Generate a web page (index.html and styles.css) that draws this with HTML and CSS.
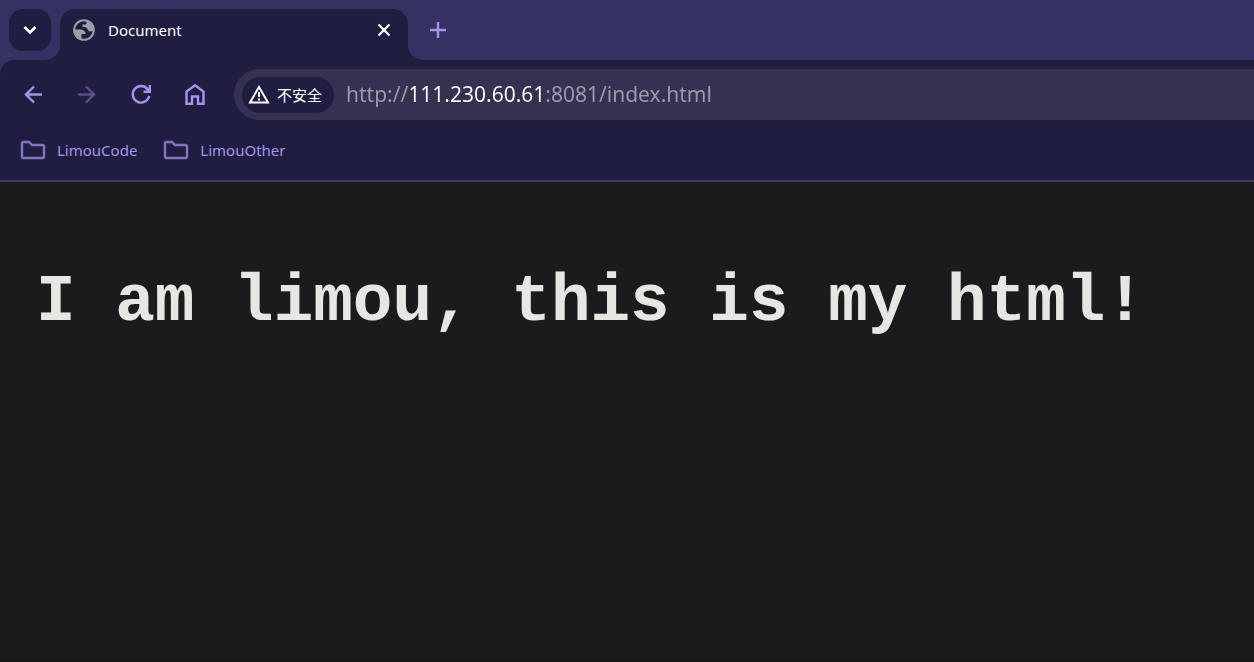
FILE: index.html
```html
<!DOCTYPE html>
<html lang="zh-CN">
<head>
<meta charset="utf-8">
<meta name="viewport" content="width=device-width, initial-scale=1">
<title>Document</title>
<link rel="stylesheet" href="styles.css">
</head>
<body>
<div class="browser">
  <header class="tab-strip">
    <button class="tab-search" type="button" aria-label="Search tabs">
      <svg width="14" height="10" viewBox="0 0 14 10" fill="none" stroke="#fff" stroke-width="2.6"><path d="M1.5 2 7 7.5 12.5 2"/></svg>
    </button>
    <div class="tab">
      <svg class="flare flare-left" width="15" height="15" viewBox="0 0 15 15"><path d="M15 0v15H0A15 15 0 0 0 15 0z"/></svg>
      <svg class="favicon" width="24" height="24" viewBox="0 0 24 24">
        <circle cx="12" cy="12" r="9.800" fill="none" stroke="#9aa0a6" stroke-width="2"/>
        <path fill="#9aa0a6" d="M1.500 11.500H8.500c3 0 4.800 1.500 5.300 4.500H9.500v3.500l-1 2.500C4 20.500 1.500 17 1.500 11.500z"/>
        <path fill="#9aa0a6" d="M14.500 1.800V5c0 1-.8 1.500-1.800 1.500H10.500V9c2.500 0 4 .3 4.800 2 .7 1.600 1.600 2.400 3 2.400 1.600 0 2.700-.6 4-1.400C22.500 7 19 2.800 14.500 1.800z"/>
      </svg>
      <span class="tab-title">Document</span>
      <button class="tab-close" type="button" aria-label="Close tab">
        <svg width="14" height="14" viewBox="0 0 14 14" stroke="#fff" stroke-width="2.2"><path d="m1.500 1.500 11 11m0-11-11 11"/></svg>
      </button>
      <svg class="flare flare-right" width="15" height="15" viewBox="0 0 15 15"><path d="M0 0v15h15A15 15 0 0 1 0 0z"/></svg>
    </div>
    <button class="new-tab" type="button" aria-label="New tab">
      <svg width="16" height="16" viewBox="0 0 16 16" stroke="#a594ec" stroke-width="2.400"><path d="M8 0v16M0 8h16"/></svg>
    </button>
  </header>

  <div class="chrome">
    <nav class="toolbar" aria-label="Navigation">
      <div class="nav-buttons">
        <button type="button" aria-label="Back"><svg width="24" height="24" viewBox="0 0 24 24"><path d="M21 11.500H5M13 3.500l-8 8 8 8"/></svg></button>
        <button type="button" aria-label="Forward" disabled><svg width="24" height="24" viewBox="0 0 24 24"><path d="M3 11.500h16M11 3.500l8 8-8 8"/></svg></button>
        <button type="button" aria-label="Reload"><svg width="24" height="24" viewBox="0 0 24 24"><path d="M18.500 6A8.300 8.300 0 1 0 20.200 13M20.800 2v6.800H14.500M19.500 7.500 16.500 4.500"/></svg></button>
        <button type="button" aria-label="Home"><svg width="24" height="24" viewBox="0 0 24 24"><path d="M3.500 20.800V8.500L12 2.200 20.500 8.500v12.300H15V13.500H9v7.300H3.500z"/></svg></button>
      </div>
      <div class="address-bar">
        <button class="security" type="button">
          <svg width="22" height="20" viewBox="0 0 22 20" fill="none" stroke="#fff"><path stroke-width="2" d="M11 2 20 17.500H2z"/><path stroke-width="2" d="M11 7v5M11 13.500v2"/></svg>
          <span>不安全</span>
        </button>
        <input class="url" type="text" aria-label="Address" value="http://111.230.60.61:8081/index.html" spellcheck="false">
      </div>
    </nav>
    <nav class="bookmarks" aria-label="Bookmarks">
      <a href="#"><svg width="26" height="20" viewBox="0 0 26 20"><path d="M3.500 2h5.500l3 3H22.500q1.500 0 1.500 1.500v10q0 1.500-1.500 1.500H3.500q-1.500 0-1.500-1.500V3.500q0-1.500 1.500-1.500z"/></svg>LimouCode</a>
      <a href="#"><svg width="26" height="20" viewBox="0 0 26 20"><path d="M3.500 2h5.500l3 3H22.500q1.500 0 1.500 1.500v10q0 1.500-1.500 1.500H3.500q-1.500 0-1.500-1.500V3.500q0-1.500 1.500-1.500z"/></svg>LimouOther</a>
    </nav>
  </div>

  <main class="page">
    <h1>I am limou, this is my html!</h1>
  </main>
</div>
</body>
</html>
```
FILE: styles.css
```css
* { box-sizing: border-box; }

body {
  margin: 0;
  background: #353263;
  color: #fff;
  font-family: "Noto Sans", "Noto Sans CJK SC", sans-serif;
}

button {
  display: flex;
  align-items: center;
  justify-content: center;
  padding: 0;
  border: 0;
  background: none;
  color: inherit;
  font: inherit;
}

svg { flex: none; }

.browser {
  display: flex;
  flex-direction: column;
  min-height: 100vh;
}

.tab-strip {
  display: flex;
  gap: 9px;
  height: 60px;
  padding: 9px 9px 0;
}

.tab-search {
  width: 42px;
  height: 42px;
  border-radius: 14px;
  background: #201e40;
}

.tab {
  position: relative;
  display: flex;
  align-items: center;
  flex: 0 1 348px;
  gap: 12px;
  padding: 0 16px 9px 12px;
  border-radius: 15px 15px 0 0;
  background: #201e40;
}

.tab-title {
  flex: 1;
  font-size: 15px;
}

.tab-close {
  width: 16px;
  height: 16px;
}

.flare {
  position: absolute;
  bottom: 0;
  fill: #201e40;
}

.flare-left { right: 100%; }
.flare-right { left: 100%; }

.new-tab {
  width: 42px;
  height: 42px;
}

.chrome {
  border-bottom: 2px solid #3f3969;
  border-radius: 14px 0 0 0;
  background: #201e40;
}

.toolbar {
  display: flex;
  align-items: center;
  gap: 27px;
  padding: 9px 0 0 21px;
}

.nav-buttons {
  display: flex;
  gap: 30px;
}

.nav-buttons svg {
  fill: none;
  stroke: #a594ec;
  stroke-width: 2.4;
}

.nav-buttons button:disabled svg { stroke: #594e8e; }

.address-bar {
  display: flex;
  align-items: center;
  flex: 1;
  gap: 12px;
  height: 51px;
  padding-left: 8px;
  border-radius: 26px 0 0 26px;
  background: #343250;
}

.security {
  gap: 7px;
  height: 36px;
  padding: 0 12px 0 6px;
  border-radius: 18px;
  background: #201e40;
  font-size: 15px;
}

.url {
  flex: 1;
  min-width: 0;
  padding: 0 0 2px;
  border: 0;
  outline: 0;
  background: linear-gradient(to right, #9c9bab 65px, #fff 65px 200px, #9c9bab 200px);
  background-clip: text;
  -webkit-background-clip: text;
  color: transparent;
  font: 21px/32px "Noto Sans", sans-serif;
}

.bookmarks {
  display: flex;
  gap: 26px;
  height: 60px;
  padding-left: 20px;
}

.bookmarks a {
  display: flex;
  align-items: center;
  gap: 11px;
  color: #a594ec;
  font-size: 15px;
  text-decoration: none;
}

.bookmarks svg {
  fill: none;
  stroke: #8375bd;
  stroke-width: 2.4;
}

.page {
  flex: 1;
  padding: 81px 36px;
  border-bottom: 2px solid #1c1418;
  background: #1a1b1c;
}

h1 {
  margin: 0;
  color: #e8e6e3;
  font: bold 66px/80px "Liberation Mono", monospace;
}
```
